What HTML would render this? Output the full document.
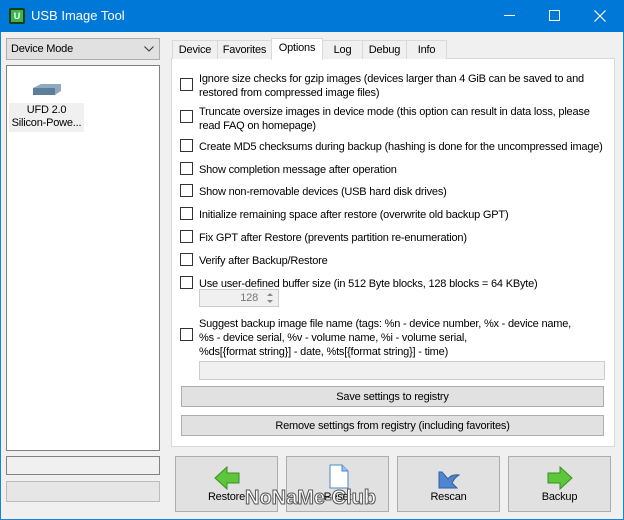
<!DOCTYPE html>
<html><head><style>
*{box-sizing:border-box;margin:0;padding:0}
body{width:624px;height:520px;overflow:hidden;background:#f0f0f0;font-family:"Liberation Sans",sans-serif;font-size:11px;letter-spacing:-0.2px;color:#000;position:relative}
.a{position:absolute}
.title{left:0;top:0;width:624px;height:32px;background:#0078d7;color:#fff;font-size:13px;letter-spacing:0}
.win{left:0;top:32px;width:624px;height:488px;border:1px solid #1883d7;border-top:none}
.cb{position:absolute;left:180px;width:13px;height:13px;border:1px solid #333;background:#fff}
.lbl{position:absolute;left:199px;line-height:14px;white-space:nowrap;margin-top:2px}
.tab{position:absolute;top:40px;height:19px;border:1px solid #d9d9d9;border-bottom:none;background:#f0f0f0;text-align:center;line-height:19px}
.btn{position:absolute;background:#e1e1e1;border:1px solid #adadad;text-align:center}
.bb{position:absolute;top:456px;width:103px;height:56px;background:#e1e1e1;border:1px solid #adadad;text-align:center}
.bb span{position:absolute;left:0;right:0;top:34px}
</style></head><body>
<div class="a title">
 <div class="a" style="left:9px;top:8px;width:16px;height:16px;background:#1a3d1a;border-radius:2px"><div class="a" style="left:2px;top:2px;width:12px;height:12px;background:#3cb54a;color:#fff;font-size:9px;font-weight:bold;text-align:center;line-height:12px">U</div></div>
 <div class="a" style="left:31px;top:8px">USB Image Tool</div>
 <div class="a" style="left:504px;top:15px;width:11px;height:1px;background:#fff"></div>
 <div class="a" style="left:549px;top:10px;width:11px;height:11px;border:1px solid #fff"></div>
 <svg class="a" style="left:594px;top:10px" width="12" height="12"><path d="M0.5 0.5L11.5 11.5M11.5 0.5L0.5 11.5" stroke="#fff" stroke-width="1.2"/></svg>
</div>
<div class="a win"></div>
<div class="a" style="left:6px;top:38px;width:154px;height:22px;background:#e1e1e1;border:1px solid #adadad;line-height:20px;padding-left:4px">Device Mode
<svg class="a" style="right:5px;top:7px" width="10" height="6"><path d="M0.5 0.5L5 5L9.5 0.5" stroke="#333" fill="none"/></svg></div>
<div class="a" style="left:6px;top:65px;width:154px;height:386px;background:#fff;border:1px solid #828282"></div>
<div class="a" style="left:9px;top:103px;width:75px;height:29px;background:#f0f0f0;text-align:center;line-height:13px;white-space:nowrap;padding-top:1px">UFD 2.0<br>Silicon-Powe...</div>
<svg class="a" style="left:32px;top:83px" width="30" height="14"><path d="M1 5L9 1H29V8L23 12H1Z" fill="#8fa9bf"/><path d="M1 5H23V12H1Z" fill="#5d7e9a"/></svg>
<div class="a" style="left:6px;top:456px;width:154px;height:19px;background:#f0f0f0;border:1px solid #828282"></div>
<div class="a" style="left:6px;top:481px;width:154px;height:21px;background:#e6e6e6;border:1px solid #bcbcbc"></div>

<div class="a" style="left:171px;top:58px;width:444px;height:389px;background:#fff;border:1px solid #d9d9d9"></div>
<div class="tab" style="left:172px;width:46px">Device</div>
<div class="tab" style="left:217px;width:55px">Favorites</div>
<div class="tab" style="left:271px;top:38px;height:22px;width:52px;background:#fff;z-index:2">Options</div>
<div class="tab" style="left:322px;width:41px">Log</div>
<div class="tab" style="left:362px;width:45px">Debug</div>
<div class="tab" style="left:406px;width:41px">Info</div>

<div class="cb" style="top:78px"></div><div class="lbl" style="top:70px">Ignore size checks for gzip images (devices larger than 4 GiB can be saved to and<br>restored from compressed image files)</div>
<div class="cb" style="top:110px"></div><div class="lbl" style="top:103px">Truncate oversize images in device mode (this option can result in data loss, please<br>read FAQ on homepage)</div>
<div class="cb" style="top:139px"></div><div class="lbl" style="top:138px">Create MD5 checksums during backup (hashing is done for the uncompressed image)</div>
<div class="cb" style="top:162px"></div><div class="lbl" style="top:161px">Show completion message after operation</div>
<div class="cb" style="top:184px"></div><div class="lbl" style="top:183px">Show non-removable devices (USB hard disk drives)</div>
<div class="cb" style="top:207px"></div><div class="lbl" style="top:206px">Initialize remaining space after restore (overwrite old backup GPT)</div>
<div class="cb" style="top:230px"></div><div class="lbl" style="top:229px">Fix GPT after Restore (prevents partition re-enumeration)</div>
<div class="cb" style="top:253px"></div><div class="lbl" style="top:252px">Verify after Backup/Restore</div>
<div class="cb" style="top:276px"></div><div class="lbl" style="top:275px">Use user-defined buffer size (in 512 Byte blocks, 128 blocks = 64 KByte)</div>
<div class="a" style="left:199px;top:289px;width:80px;height:18px;background:#f0f0f0;border:1px solid #ccc;color:#777;text-align:right;padding-right:20px;line-height:16px">128</div>
<svg class="a" style="left:265px;top:292px" width="10" height="12"><path d="M2 4L5 1L8 4Z M2 8L5 11L8 8Z" fill="#888"/></svg>
<div class="cb" style="top:328px"></div><div class="lbl" style="top:315px">Suggest backup image file name (tags: %n - device number, %x - device name,<br>%s - device serial, %v - volume name, %i - volume serial,<br>%ds[{format string}] - date, %ts[{format string}] - time)</div>
<div class="a" style="left:199px;top:361px;width:406px;height:19px;background:#f0f0f0;border:1px solid #ccc"></div>
<div class="btn" style="left:181px;top:386px;width:423px;height:21px;line-height:20px">Save settings to registry</div>
<div class="btn" style="left:181px;top:415px;width:423px;height:21px;line-height:20px">Remove settings from registry (including favorites)</div>

<div class="bb" style="left:175px"><svg class="a" style="left:38px;top:9px" width="26" height="24"><path d="M1 12L13 1V7H25V17H13V23Z" fill="#5ec63a" stroke="#3a8f22"/></svg><span>Restore</span></div>
<div class="bb" style="left:286px"><svg class="a" style="left:42px;top:7px" width="20" height="25"><path d="M1 1H13L19 7V24H1Z" fill="#fff" stroke="#4b86c8"/><path d="M13 1V7H19" fill="#9cc3ea" stroke="#4b86c8"/></svg><span>Reset</span></div>
<div class="bb" style="left:397px"><svg class="a" style="left:40px;top:12px" width="22" height="20"><path d="M1 3V19H19L14 14C16 10 19 7 21 6C16 5 12 7 10 10L4 3Z" fill="#4f86cf" stroke="#2f5fa0"/></svg><span>Rescan</span></div>
<div class="bb" style="left:508px"><svg class="a" style="left:38px;top:9px" width="26" height="24"><path d="M25 12L13 1V7H1V17H13V23Z" fill="#5ec63a" stroke="#3a8f22"/></svg><span>Backup</span></div>
<div class="a" style="left:245px;top:487px;font-size:20px;color:#fff;-webkit-text-stroke:1px #555;font-weight:bold;letter-spacing:0px">NoNaMe-Club</div>
</body></html>
